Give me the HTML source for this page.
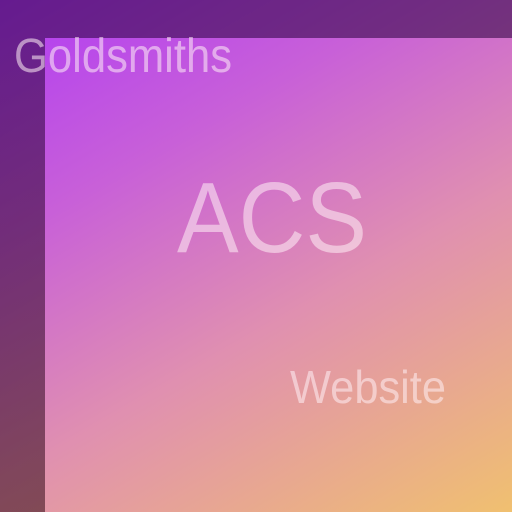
<!DOCTYPE html>
<html><head><style>
html,body{margin:0;padding:0;width:512px;height:512px;overflow:hidden}
.bg{position:absolute;inset:0;background:linear-gradient(150deg,#b03cf4 0%,#c860d8 30%,#e090b0 60%,#f0c070 100%)}
.d1{position:absolute;left:0;top:0;width:512px;height:38px;background:rgba(40,0,60,0.55)}
.d2{position:absolute;left:0;top:38px;width:45px;height:474px;background:linear-gradient(180deg,rgba(40,0,60,0.55),rgba(50,10,20,0.55))}
svg{position:absolute;left:0;top:0}
text{font-family:"Liberation Sans",sans-serif;fill:rgba(255,240,245,0.55)}
</style></head><body>
<div class="bg"></div><div class="d1"></div><div class="d2"></div>
<svg width="512" height="512">
<text x="14" y="72" font-size="48" textLength="218" lengthAdjust="spacingAndGlyphs">Goldsmiths</text>
<text x="177" y="252" font-size="100" textLength="190" lengthAdjust="spacingAndGlyphs">ACS</text>
<text x="290" y="403" font-size="46" textLength="156" lengthAdjust="spacingAndGlyphs">Website</text>
</svg>
</body></html>
